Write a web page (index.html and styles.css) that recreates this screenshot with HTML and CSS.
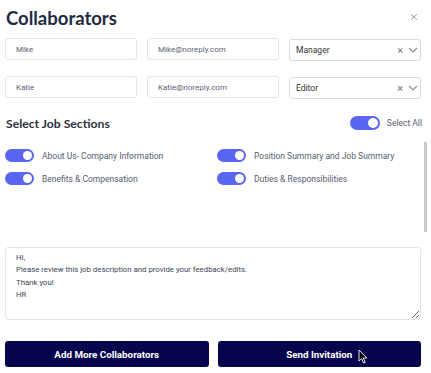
FILE: index.html
```html
<!DOCTYPE html>
<html lang="en">
<head>
    <meta charset="UTF-8">
    <meta name="viewport" content="width=device-width, initial-scale=1.0">
    <title>Collaborators</title>
    <link rel="stylesheet" href="styles.css">
</head>
<body>
    <div class="modal">
        <div class="modal-header">
            <h1 class="modal-title">Collaborators</h1>
            <button class="close-btn" aria-label="Close">
                <svg width="8" height="8" viewBox="0 0 8 8"><path d="M1 1L7 7M7 1L1 7" stroke="#9aa0aa" stroke-width="1"/></svg>
            </button>
        </div>

        <div class="collab-list">
            <input class="text-input" type="text" value="Mike">
            <input class="text-input" type="text" value="Mike@noreply.com">
            <div class="role-select">
                <span class="role-value">Manager</span>
                <span class="role-clear">&times;</span>
                <svg class="role-arrow" width="10" height="6" viewBox="0 0 10 6"><path d="M1 1L5 5L9 1" fill="none" stroke="#8a8f99" stroke-width="1.2"/></svg>
            </div>
            <input class="text-input" type="text" value="Katie">
            <input class="text-input" type="text" value="Katie@noreply.com">
            <div class="role-select">
                <span class="role-value">Editor</span>
                <span class="role-clear">&times;</span>
                <svg class="role-arrow" width="10" height="6" viewBox="0 0 10 6"><path d="M1 1L5 5L9 1" fill="none" stroke="#8a8f99" stroke-width="1.2"/></svg>
            </div>
        </div>

        <div class="sections-head">
            <h2 class="sections-title">Select Job Sections</h2>
            <label class="toggle-item">
                <span class="toggle on"><span class="knob"></span></span>
                <span class="toggle-label">Select All</span>
            </label>
        </div>

        <div class="sections">
            <div class="section-grid">
                <label class="toggle-item">
                    <span class="toggle on"><span class="knob"></span></span>
                    <span class="toggle-label">About Us- Company Information</span>
                </label>
                <label class="toggle-item">
                    <span class="toggle on"><span class="knob"></span></span>
                    <span class="toggle-label">Position Summary and Job Summary</span>
                </label>
                <label class="toggle-item">
                    <span class="toggle on"><span class="knob"></span></span>
                    <span class="toggle-label">Benefits &amp; Compensation</span>
                </label>
                <label class="toggle-item">
                    <span class="toggle on"><span class="knob"></span></span>
                    <span class="toggle-label">Duties &amp; Responsibilities</span>
                </label>
            </div>
            <div class="scroll-thumb"></div>
        </div>

        <textarea class="message">HI,
Please review this job description and provide your feedback/edits.
Thank you!
HR</textarea>

        <div class="actions">
            <button class="action-btn">Add More Collaborators</button>
            <button class="action-btn send-btn">Send Invitation
                <svg class="cursor" width="10" height="15" viewBox="0 0 10 15"><path d="M1 1L1 12L3.6 9.6L5.6 14L7.2 13.3L5.3 9L8.8 9Z" fill="#000" stroke="#fff" stroke-width="0.9"/></svg>
            </button>
        </div>
    </div>
</body>
</html>
```

FILE: styles.css
```css
body {
    margin: 0;
    background-color: #ffffff;
    font-family: Roboto, "Liberation Sans", sans-serif;
}
.modal {
    width: 431px;
    height: 373px;
    padding: 0 10px 0 5px;
    box-sizing: border-box;
}
.modal-header {
    display: flex;
    justify-content: space-between;
    align-items: center;
    height: 38px;
}
.modal-title {
    margin: 0 0 2px 1px;
    font-family: Lato, sans-serif;
    font-size: 18.5px;
    font-weight: 700;
    color: #1f2a44;
}
.close-btn {
    border: none;
    background: none;
    padding: 0;
    margin: 0 3px 4px 0;
    display: flex;
}
.collab-list {
    display: grid;
    grid-template-columns: 1fr 1fr 1fr;
    column-gap: 10px;
    row-gap: 15px;
}
.text-input {
    height: 22px;
    box-sizing: border-box;
    border: 1px solid #e2e5ea;
    border-radius: 3px;
    padding: 1px 10px 0;
    font-family: Roboto, sans-serif;
    font-size: 8px;
    color: #5b6172;
    min-width: 0;
}
.role-select {
    height: 22px;
    box-sizing: border-box;
    border: 1px solid #d8dbe0;
    border-radius: 3px;
    display: flex;
    align-items: center;
    padding: 0 2px 0 6px;
    margin-top: 1px;
}
.role-value {
    flex: 1;
    font-size: 8.5px;
    color: #333;
}
.role-clear {
    font-size: 11px;
    color: #777;
    margin-right: 5px;
}
.sections-head {
    display: flex;
    justify-content: space-between;
    align-items: center;
    margin-top: 17px;
    height: 14px;
}
.sections-title {
    margin: 0 0 0 1px;
    font-family: Lato, sans-serif;
    font-size: 12.2px;
    font-weight: 700;
    color: #2b3040;
}
.toggle-item {
    display: flex;
    align-items: center;
    gap: 8px;
}
.toggle {
    width: 29px;
    height: 13px;
    border-radius: 7px;
    background-color: #5a66f2;
    display: flex;
    align-items: center;
    justify-content: flex-end;
    padding: 0 2px;
    box-sizing: border-box;
}
.knob {
    width: 9px;
    height: 9px;
    border-radius: 50%;
    background: #ffffff;
}
.toggle-label {
    font-size: 8.5px;
    color: #555c72;
}
.sections-head .toggle-item {
    gap: 7px;
    margin-right: -1px;
}
.sections-head .toggle {
    width: 30px;
    height: 14px;
}
.sections-head .knob {
    width: 10px;
    height: 10px;
}
.sections {
    display: flex;
    height: 97px;
    margin-top: 8px;
    margin-right: -6px;
    gap: 3px;
}
.section-grid {
    flex: 1;
    display: grid;
    grid-template-columns: 1fr 1fr;
    column-gap: 8px;
    row-gap: 10px;
    align-content: start;
    padding-top: 11px;
}
.scroll-thumb {
    width: 3px;
    height: 90px;
    margin-top: 4px;
    background-color: #c9c9c9;
}
.message {
    display: block;
    width: 100%;
    height: 73px;
    margin-top: 12px;
    box-sizing: border-box;
    border: 1px solid #e2e5ea;
    border-radius: 3px;
    padding: 4px 10px;
    font-family: Roboto, sans-serif;
    font-size: 7.8px;
    line-height: 12.3px;
    color: #3d4356;
    resize: vertical;
}
.actions {
    display: grid;
    grid-template-columns: 1fr 1fr;
    column-gap: 9px;
    margin-top: 21px;
}
.action-btn {
    height: 26px;
    border: none;
    border-radius: 3px;
    background-color: #05044c;
    color: #ffffff;
    font-family: Roboto, sans-serif;
    font-size: 9.8px;
    font-weight: 700;
    cursor: pointer;
}
.send-btn {
    position: relative;
}
/* mouse pointer in the screenshot */
.cursor {
    position: absolute;
    left: 140px;
    top: 8px;
}
```
